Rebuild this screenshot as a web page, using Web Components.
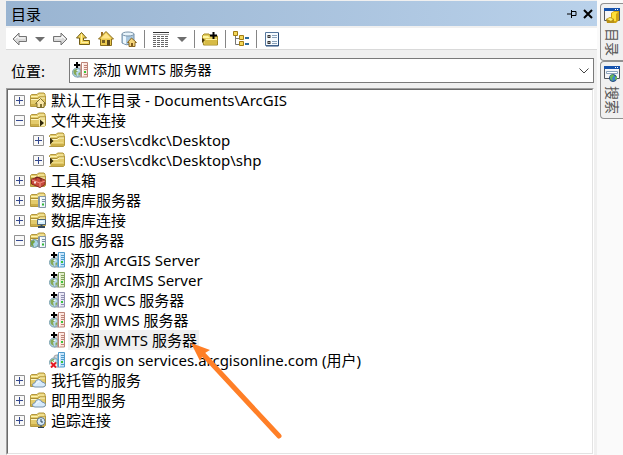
<!DOCTYPE html>
<html lang="zh-CN">
<head>
<meta charset="utf-8">
<title>目录</title>
<style>
html, body { height: 100%; margin: 0; }
body { background: #f0f0f0; color: #000; font: 15px/20px "Noto Sans", "Noto Sans CJK SC", sans-serif; overflow: hidden; }
</style>
</head>
<body>
<catalog-app></catalog-app>
<script>
const folder = `<path d="M.5 3.500 1.500 2.500H7l1.500-1.500h5.500l1 1v2h.5v9.500l-1 1H.5z" fill="#e3cb6c" stroke="#b3983f"/><path d="M1 4.500h6.500L9 3h5.500" fill="none" stroke="#fdf3b0"/><path d="M1 6.500h7L9.500 5H15" fill="none" stroke="#a88d35"/><path d="M1 7.500h7.500L10 6h5" fill="none" stroke="#fff7c4"/><path d="M1 12h14v2H1z" fill="#cbae48"/>`;
const globe = `<path d="M5 5q0-2 3-2h2v12H5z" fill="#d5d5d5" stroke="#a4a4a4"/><circle cx="5" cy="10.500" r="4.500" fill="#b4d8ee" stroke="#7ba1ad"/><path d="M1.500 8.500Q3 6.500 5 7l1 2-2 1.500 1 3.500Q2 13 1.500 11z" fill="#86a856"/><path d="M6.500 11l2-1v2l-2 2z" fill="#86a856"/><path d="M4.500 8.500h2" stroke="#eefaff"/>`;
const server = (fill, line) => `<path d="M8.500 3 10 .5V14l-1.500 1.500z" fill="${line}"/><path d="M9.500.5h6v14.500h-6z" fill="${fill}" stroke="${line}"/><path d="M10.500 1v13.500" stroke="#fff"/><path d="M12 3.500h3M12 5.500h3M12 7.500h3M12 12.500h3" stroke="${line}"/><path d="M12 9h2v2h-2z" fill="#38c43b"/>`;
const plus = `<path d="M5 0v6M2 3h6" stroke="#000" stroke-width="2"/>`;
const smallServer = `<path d="M8 4.500h2v11H8z" fill="#8398aa"/><path d="M9.500 4.500h6v11h-6z" fill="#eef5fa" stroke="#8497a8"/><path d="M10.500 5v10" stroke="#fff"/><path d="M12 7.500h3M12 9.500h3" stroke="#7790a5"/><path d="M12 11.500h2v2h-2z" fill="#2fb737"/>`;
const cloud = `<path d="M5 15q-2.500 0-2.500-2t2.500-2.200q.5-3.300 3.500-3.300 2.500 0 3.500 2.500 3.500.5 3.500 2.700 0 2.300-2.500 2.300z" fill="#d6eafb" stroke="#7994ad"/><path d="M5.500 12q2-2.500 4-2.500" fill="none" stroke="#fff"/>`;
const win = `<path d="M.5.5h15v12H.5z" fill="#f5f5f7" stroke="#53565d"/><path d="M0 0h16v3H0z" fill="#1552ad"/><path d="M11 1h1v1h-1zM13 1h1v1h-1z" fill="#fff"/>`;
const house = `<path d="m10.500 6.500-5 5H7v4h7v-4h1.500z" fill="#f9e6a8" stroke="#80702f"/><path d="M10 12h2v3h-2z" fill="#80702f"/>`;
const arrow = `<path d="M1 8 7 2v3.500h7.500v5H7V14z" fill="#d8d8d8" stroke="#747474"/><path d="M3 8l3-3v2h7" fill="none" stroke="#fff"/>`;
const ICONS = {
  back: arrow,
  forward: `<g transform="matrix(-1 0 0 1 16 0)">${arrow}</g>`,
  more: `<path d="M3 6h10l-5 5z" fill="#6e6e6e"/>`,
  up: `<path d="M6.500 1.500 1.500 7h3v6.500h10v-4h-6V7h3z" fill="#f3d458" stroke="#715d17"/><path d="M6.500 3v8.500H13" fill="none" stroke="#fff1a4"/>`,
  home: `<path d="M3 1h2v5H3z" fill="#9d6b1d"/><path d="M8 .5.5 8h2v6.500h11V8h2z" fill="#eac94f" stroke="#8a6d1e"/><path d="M8 2 3 7.500h10z" fill="#ffe58b"/><path d="M4 9h3v3H4z" fill="#765f25"/><path d="M9 9h3v5.500H9z" fill="#5c481c"/>`,
  dbhome: `<path d="M1 3v9q4 3 9 1l3-2V3z" fill="#a9c7df" stroke="#7892a8"/><path d="M2 4v8q2 1 3 1V4z" fill="#edf8ff"/><ellipse cx="7" cy="3" rx="6" ry="2" fill="#e8f4fb" stroke="#7892a8"/><path d="m10.500 7-4 4.500H8v4h6v-4h1.500z" fill="#f5d57a" stroke="#886624"/><path d="M10 12h2v3h-2z" fill="#80591c"/>`,
  details: `<path d="M1 1.500h16" stroke="#333"/><path d="M1 3.500h16" stroke="#999"/><path d="M1 5.500h16M1 7.500h16M1 9.500h16M1 11.500h16M1 13.500h16M1 15.500h16" stroke="#666" stroke-dasharray="3 1"/>`,
  connect: `<path d="M.5 4.500 2 3h5l1.500 2H15.500v9H1.500z" fill="#e3cd5c" stroke="#a48924"/><path d="M1 5h5l2 2H1z" fill="#fff6a0"/><path d="M3 9h12.500l-1 4.500H3z" fill="#d7bb46"/><path d="M4 8.500h11" stroke="#fff3a0"/><path d="m0 7 3 2-3 3z" fill="#49370b"/><path d="M11.500 1v7M8 4.500h7" stroke="#000" stroke-width="2"/>`,
  tree: `<path d="M2.500 5v8.500H7M3 7.500h4" fill="none" stroke="#777"/><path d="M.5.5h4v4h-4zM6.500 4.500h4v4h-4zM6.500 10.500h4v4h-4z" fill="#f4d859" stroke="#a17c15"/><path d="M12 7h4M12 13h4" stroke="#2d6b9c" stroke-width="2"/>`,
  options: `<path d="M1.500 1.500h13v13h-13z" fill="#f6fbff" stroke="#56779d"/><path d="M14.500 2v13H2" fill="none" stroke="#294d7a"/><path d="M3.500 4h3v3h-3zM3.500 10h3v3h-3z" fill="#333"/><path d="M4.500 5h1v1h-1zM4.500 11h1v1h-1z" fill="#fff"/><path d="M8 4.500h5M8 6.500h5M8 10.500h5M8 12.500h5" stroke="#8ba3bb"/>`,
  pin: `<path d="M3 8h4M7.500 4v8M7 5.500h5v4H7M7 9.500h5" fill="none" stroke="#000"/>`,
  close: `<path d="m4 4 8 8m0-8-8 8" stroke="#000" stroke-width="2"/>`,
  homefolder: folder + house,
  link: folder + `<path d="M9 7.500h6v7H9z" fill="#f9efb0"/><path d="m10 7.500 4 3.500-4 3.500z" fill="#312708"/>`,
  open: folder + `<path d="M0 5h1.500v9H0z" fill="#fff"/><path d="M1 5.500 4.500 9 1 12.500z" fill="#3b300f"/><path d="M3 10.500h11" stroke="#eedb88"/>`,
  toolbox: folder + `<path d="m1.500 7.500 6-2.500 7.500 3v4.500l-5 3-8.500-3.500z" fill="#c94a3c" stroke="#8b2a23"/><path d="m2 8 8 3 5-2M10 11v4" fill="none" stroke="#f0958a"/><path d="M6 7.500V5l5 1.500V9" fill="none" stroke="#6a2520"/><path d="M4 9.500h2v2H4z" fill="#f3e5e0"/>`,
  dbserver: folder + smallServer,
  dbconn: folder + `<path d="M7.500 7.500h8v5h-8z" fill="#d7f1ff" stroke="#52677b"/><path d="M9 9.500h4" stroke="#fff"/><path d="M11.500 13v2M8 15h7" stroke="#34495e" stroke-width="2"/>`,
  gis: folder + `<circle cx="4.500" cy="11.500" r="4" fill="#a9d5e8" stroke="#6d929e"/><path d="M1 9.500l3-1.500 1 2-2 2 1 3-3-2z" fill="#75a144"/>` + smallServer,
  srvblue: globe + server('#c5e4fb', '#4f9bcc') + plus,
  srvgreen: globe + server('#e0edc8', '#84a05d') + plus,
  srvviolet: globe + server('#e8e7f5', '#8f8fb0') + plus,
  srvred: globe + server('#fde6de', '#bd8478') + plus,
  srvoff: globe + server('#c5e4fb', '#4f9bcc') + `<path d="m2 10.500 5 5m0-5-5 5" stroke="#fff" stroke-width="4"/><path d="m2 10.500 5 5m0-5-5 5" stroke="#e31a24" stroke-width="2"/>`,
  cloud: folder + cloud,
  tracking: folder + `<circle cx="11" cy="9.500" r="4" fill="#d5eafa" stroke="#5f7486"/><path d="M11 7v3h2M11 13.500v2M8 15.500h6" fill="none" stroke="#2b4052"/>`,
  catalog: win + `<path d="m7 5 3-2h5v9l-3 3H7z" fill="#d1a414"/><path d="m8 5 2-1h4l-2 2v7H8z" fill="#ffdf36"/><path d="m2 11 4-2 4 2v4H3z" fill="#b99116"/><path d="m3 11 3-1 3 1-2 2z" fill="#fff177"/>`,
  search: win + `<path d="M2.500 5.500h11v2h-11z" fill="#fff" stroke="#8ca5be"/><circle cx="9" cy="12" r="3.500" fill="#3e83d1" stroke="#254877"/><path d="m6 10 3-2 1 2-2 2 1 3q-3-1-3-3zM11 11l2-1v3l-2 1z" fill="#69b755"/>`
};

function define(name, render) {
  customElements.define(name, class extends HTMLElement {
    connectedCallback() {
      if (this.shadowRoot) return;
      this.attachShadow({ mode: 'open' }).innerHTML = render(this);
    }
  });
}

const buttonReset = 'button{display:block;margin:0;padding:0;border:0;background:none;color:inherit;font:inherit}';

define('app-icon', el => {
  const w = el.getAttribute('name') === 'details' ? 18 : 16;
  return `<style>:host{display:block;flex:none}svg{display:block}</style>
  <svg width="${w}" height="16" viewBox="0 0 ${w} 16" aria-hidden="true">${ICONS[el.getAttribute('name')]}</svg>`;
});

define('icon-button', el => `<style>
  :host{display:block;flex:none}${buttonReset}
  :host([narrow]) button{width:10px;display:flex;justify-content:center}
  </style><button type="button" aria-label="${el.getAttribute('label')}"><app-icon name="${el.getAttribute('icon')}"></app-icon></button>`);

define('title-bar', () => `<style>
  :host{display:flex;align-items:center;height:25px;padding:0 1px 0 5px;background:linear-gradient(90deg,#99b4d1,#b9d1ea)}
  h1{flex:1;margin:0;font:inherit}
  </style><h1><slot></slot></h1><icon-button icon="pin" label="自动隐藏"></icon-button><icon-button icon="close" label="关闭"></icon-button>`);

define('tool-bar', () => `<style>
  :host{display:flex;align-items:center;gap:7px;height:21px;margin-top:2px;padding:0 6px;background:#fff;border-bottom:1px solid #d9d9d9}
  i{width:1px;height:18px;background:#858585}
  </style>
  <icon-button icon="back" label="后退"></icon-button><icon-button narrow icon="more" label="后退列表"></icon-button>
  <icon-button icon="forward" label="前进"></icon-button><icon-button icon="up" label="向上一级"></icon-button>
  <icon-button icon="home" label="默认工作目录"></icon-button><icon-button icon="dbhome" label="默认地理数据库"></icon-button><i></i>
  <icon-button icon="details" label="视图"></icon-button><icon-button narrow icon="more" label="视图列表"></icon-button><i></i>
  <icon-button icon="connect" label="连接到文件夹"></icon-button><i></i>
  <icon-button icon="tree" label="切换内容面板"></icon-button><i></i>
  <icon-button icon="options" label="选项"></icon-button>`);

define('location-box', () => `<style>
  :host{display:flex;align-items:center;padding:8px 3px 5px 5px}
  label{width:58px}
  .field{flex:1;position:relative;min-width:0}
  select{display:block;box-sizing:border-box;width:100%;height:25px;margin:0;padding:0 24px 2px 23px;appearance:none;border:1px solid #7a7a7a;border-radius:0;background:#fff;color:#000;font:inherit;font-size:14px}
  app-icon{position:absolute;left:3px;top:4px}
  .chevron{position:absolute;right:5px;top:10px;pointer-events:none}
  </style><label for="place">位置:</label>
  <div class="field"><select id="place"><option>添加 WMTS 服务器</option></select><app-icon name="srvred"></app-icon>
  <svg class="chevron" width="10" height="6" aria-hidden="true"><path d="m.5.5 4.500 4.500L9.500.5" fill="none" stroke="#444"/></svg></div>`);

define('tree-node', el => {
  const state = el.getAttribute('state');
  const toggle = state ? `<button type="button" aria-label="${state === 'open' ? '折叠' : '展开'}" aria-expanded="${state === 'open'}"><svg width="11" height="11"><path d="M.5.5h10v10H.5z" fill="#f8f8f8" stroke="#919191"/><path d="M2 5.500h7${state === 'open' ? '' : 'M5.500 2v7'}" stroke="#33478f"/></svg></button>` : '';
  return `<style>
  :host{display:block}${buttonReset}
  svg{display:block}
  .row{display:flex;align-items:center;height:20px}
  .toggle{width:16px;flex:none}
  .text{margin-left:3px;padding:0 2px;white-space:nowrap}
  :host([selected]) .text{background:#f0f0f0}
  .children{margin-left:19px}
  </style><div class="row"><div class="toggle">${toggle}</div><app-icon name="${el.getAttribute('icon')}"></app-icon><span class="text">${el.getAttribute('label')}</span></div>
  <div class="children" role="group"><slot></slot></div>`;
});

const node = (icon, label, state = '', kids = '', extra = '') =>
  `<tree-node role="treeitem" icon="${icon}" label="${label}" state="${state}" ${extra}>${kids}</tree-node>`;

define('catalog-tree', () => `<style>
  :host{display:block;flex:1;margin-right:3px;border:1px solid;border-color:#a0a0a0 #fff #fff #a0a0a0;overflow:hidden}
  div{box-sizing:border-box;height:100%;padding-left:6px;border:1px solid;border-color:#696969 #e3e3e3 #e3e3e3 #696969;background:#fff}
  </style><div role="tree" aria-label="目录">` +
  node('homefolder', '默认工作目录 - Documents\\ArcGIS', 'closed') +
  node('link', '文件夹连接', 'open',
    node('open', 'C:\\Users\\cdkc\\Desktop', 'closed') + node('open', 'C:\\Users\\cdkc\\Desktop\\shp', 'closed')) +
  node('toolbox', '工具箱', 'closed') +
  node('dbserver', '数据库服务器', 'closed') +
  node('dbconn', '数据库连接', 'closed') +
  node('gis', 'GIS 服务器', 'open',
    node('srvblue', '添加 ArcGIS Server') + node('srvgreen', '添加 ArcIMS Server') +
    node('srvviolet', '添加 WCS 服务器') + node('srvred', '添加 WMS 服务器') +
    node('srvred', '添加 WMTS 服务器', '', '', 'selected') +
    node('srvoff', 'arcgis on services.arcgisonline.com (用户)')) +
  node('cloud', '我托管的服务', 'closed') +
  node('cloud', '即用型服务', 'closed') +
  node('tracking', '追踪连接', 'closed') + `</div>`);

define('side-tab', el => `<style>
  :host{display:block}
  button{display:flex;flex-direction:column;align-items:center;gap:4px;box-sizing:border-box;width:100%;height:58px;margin:0;padding:4px 0 0;border:1px solid #919191;border-right:0;border-radius:4px 0 0 4px;background:#f0f0f0;color:#555;font:inherit;font-size:14px}
  span{writing-mode:vertical-rl;text-orientation:sideways;line-height:20px}
  </style><button type="button"><app-icon name="${el.getAttribute('icon')}"></app-icon><span><slot></slot></span></button>`);

define('pointer-arrow', () => `<style>
  :host{position:absolute;left:190px;top:342px;pointer-events:none}svg{display:block}
  </style><svg width="94" height="98" aria-hidden="true"><path d="m1 1 19 7-5 3-2 2-3 6z" fill="#ff7f27"/><path d="m11 10 78 84" stroke="#ff7f27" stroke-width="5" stroke-linecap="round"/></svg>`);

define('catalog-app', () => `<style>
  :host{display:flex;position:relative;height:100%}
  main{flex:1;min-width:0;display:flex;flex-direction:column;box-sizing:border-box;margin-left:6px;padding-top:1px}
  aside{width:26px;box-sizing:border-box;padding:3px 0 0 3px;background:#fafafa}
  </style>
  <main><title-bar>目录</title-bar><tool-bar></tool-bar><location-box></location-box><catalog-tree></catalog-tree></main>
  <aside><side-tab icon="catalog">目录</side-tab><side-tab icon="search">搜索</side-tab></aside>
  <pointer-arrow></pointer-arrow>`);
</script>
</body>
</html>
